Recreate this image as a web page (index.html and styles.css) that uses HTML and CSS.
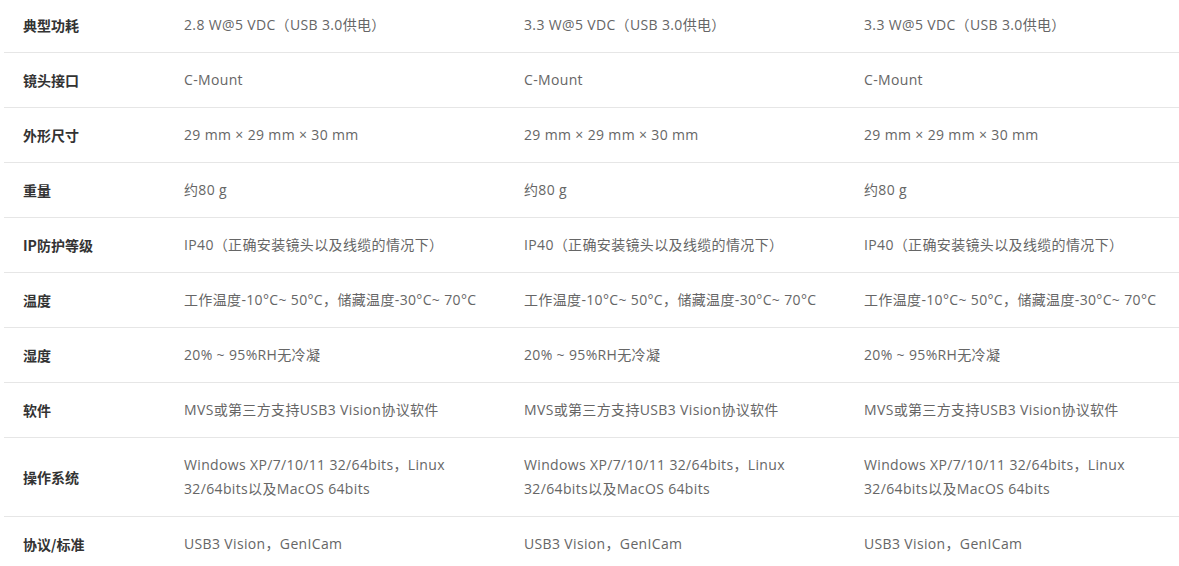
FILE: index.html
```html
<!DOCTYPE html>
<html lang="zh-CN">
<head>
<meta charset="utf-8">
<link rel="stylesheet" href="styles.css">
</head>
<body>
<table class="spec">
  <colgroup><col class="c-label"><col class="c-val"><col class="c-val"><col class="c-val"></colgroup>
  <tbody>
    <tr><th>典型功耗</th><td>2.8 W@5 VDC（USB 3.0供电）</td><td>3.3 W@5 VDC（USB 3.0供电）</td><td>3.3 W@5 VDC（USB 3.0供电）</td></tr>
    <tr><th>镜头接口</th><td>C-Mount</td><td>C-Mount</td><td>C-Mount</td></tr>
    <tr><th>外形尺寸</th><td>29 mm × 29 mm × 30 mm</td><td>29 mm × 29 mm × 30 mm</td><td>29 mm × 29 mm × 30 mm</td></tr>
    <tr><th>重量</th><td>约80 g</td><td>约80 g</td><td>约80 g</td></tr>
    <tr><th>IP防护等级</th><td>IP40（正确安装镜头以及线缆的情况下）</td><td>IP40（正确安装镜头以及线缆的情况下）</td><td>IP40（正确安装镜头以及线缆的情况下）</td></tr>
    <tr><th>温度</th><td>工作温度-10°C~ 50°C，储藏温度-30°C~ 70°C</td><td>工作温度-10°C~ 50°C，储藏温度-30°C~ 70°C</td><td>工作温度-10°C~ 50°C，储藏温度-30°C~ 70°C</td></tr>
    <tr><th>湿度</th><td>20% ~ 95%RH无冷凝</td><td>20% ~ 95%RH无冷凝</td><td>20% ~ 95%RH无冷凝</td></tr>
    <tr><th>软件</th><td>MVS或第三方支持USB3 Vision协议软件</td><td>MVS或第三方支持USB3 Vision协议软件</td><td>MVS或第三方支持USB3 Vision协议软件</td></tr>
    <tr><th>操作系统</th><td>Windows XP/7/10/11 32/64bits，Linux 32/64bits以及MacOS 64bits</td><td>Windows XP/7/10/11 32/64bits，Linux 32/64bits以及MacOS 64bits</td><td>Windows XP/7/10/11 32/64bits，Linux 32/64bits以及MacOS 64bits</td></tr>
    <tr><th>协议/标准</th><td>USB3 Vision，GenICam</td><td>USB3 Vision，GenICam</td><td>USB3 Vision，GenICam</td></tr>
  </tbody>
</table>
</body>
</html>
```
FILE: styles.css
```css
html, body {
  margin: 0;
  padding: 0;
  background: #fff;
  overflow: hidden;
}
body {
  padding-left: 4px;
  font-family: "Open Sans", "Noto Sans CJK SC", sans-serif;
  font-size: 14px;
  line-height: 24px;
}
.spec {
  border-collapse: collapse;
  table-layout: fixed;
  width: 1181px;
  margin-top: -2px;
}
.c-label { width: 161px; }
.c-val { width: 340px; }
.spec th,
.spec td {
  padding: 15px 19px;
  border-bottom: 1px solid #e6e6e6;
  vertical-align: middle;
  text-align: left;
}
.spec th {
  font-family: "Noto Sans CJK SC", sans-serif;
  font-weight: bold;
  color: #333;
}
.spec td {
  color: #666;
  letter-spacing: 0.35px;
}
```
